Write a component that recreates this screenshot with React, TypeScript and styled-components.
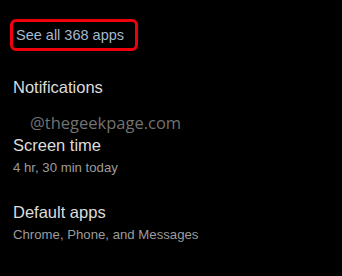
import React from 'react';
import styled, { createGlobalStyle } from 'styled-components';

const GlobalStyle = createGlobalStyle`
  html, body {
    margin: 0;
    padding: 0;
    background: #000;
  }
  body {
    font-family: "Liberation Sans", Arial, sans-serif;
  }
`;

const Screen = styled.div`
  width: 342px;
  height: 276px;
  background: #000;
  position: relative;
  overflow: hidden;
  display: flex;
  flex-direction: column;
  padding: 19px 0 0 10px;
  box-sizing: border-box;
`;

const SeeAllBox = styled.div`
  align-self: flex-start;
  width: 128px;
  height: 32px;
  box-sizing: border-box;
  border: 3px solid #f0000c;
  border-radius: 6px;
  display: flex;
  align-items: center;
  padding-left: 3px;
  margin-bottom: 26px;
`;

const SeeAllText = styled.span`
  font-size: 14.5px;
  color: #a3b8d0;
`;

const Item = styled.div<{ $gap: number }>`
  display: flex;
  flex-direction: column;
  padding-left: 3px;
  margin-bottom: ${(p) => p.$gap}px;
`;

const Title = styled.div`
  font-size: 16.5px;
  color: #dcdcdc;
  line-height: 20px;
`;

const Subtitle = styled.div`
  font-size: 13.2px;
  color: #9c9c9c;
  line-height: 18px;
  margin-top: 4px;
`;

const Watermark = styled.div`
  position: absolute;
  left: 30px;
  top: 111px;
  font-family: "Open Sans", sans-serif;
  font-size: 16.5px;
  color: #727272;
`;

export default function App() {
  return (
    <>
      <GlobalStyle />
      <Screen>
        <SeeAllBox>
          <SeeAllText>See all 368 apps</SeeAllText>
        </SeeAllBox>
        <Item $gap={38}>
          <Title>Notifications</Title>
        </Item>
        <Item $gap={25}>
          <Title>Screen time</Title>
          <Subtitle>4 hr, 30 min today</Subtitle>
        </Item>
        <Item $gap={0}>
          <Title>Default apps</Title>
          <Subtitle>Chrome, Phone, and Messages</Subtitle>
        </Item>
        <Watermark>@thegeekpage.com</Watermark>
      </Screen>
    </>
  );
}
